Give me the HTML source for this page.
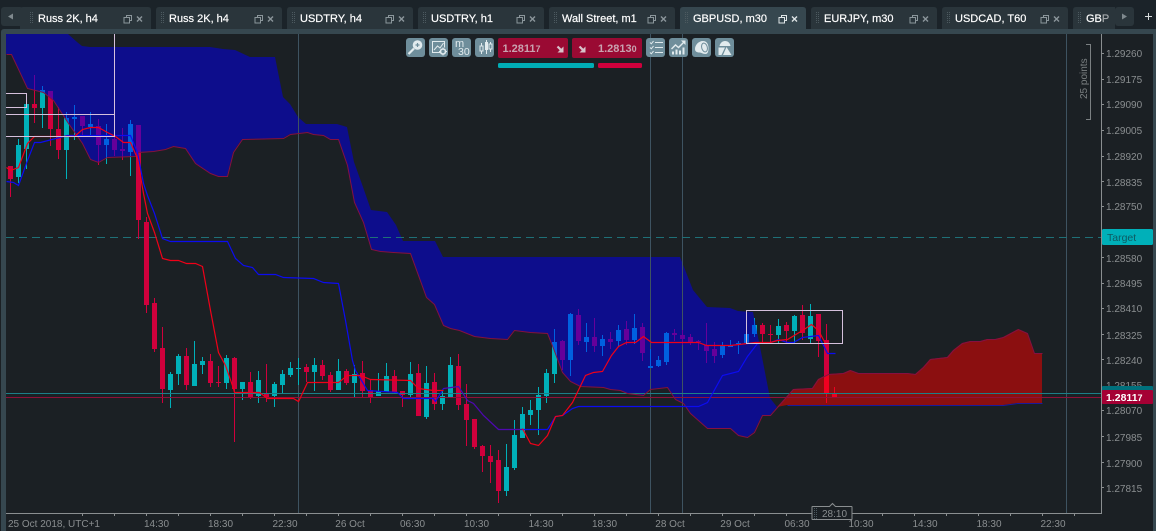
<!DOCTYPE html>
<html><head><meta charset="utf-8"><style>
html,body{margin:0;padding:0;background:#1b2024;width:1156px;height:531px;overflow:hidden}
svg{display:block}
text{font-family:"Liberation Sans",Arial,sans-serif}
.tab{font-size:11px;fill:#fff;stroke:#fff;stroke-width:.2px}
.y{font-size:10px;fill:#8a8e90}
.x{font-size:10px;fill:#8a8e90;text-anchor:middle}
</style></head><body>
<svg width="1156" height="531" viewBox="0 0 1156 531" xmlns="http://www.w3.org/2000/svg">
<defs>
<clipPath id="cc"><rect x="6" y="34" width="1095" height="479"/></clipPath>
<clipPath id="blue"><polygon points="6,34 68,34 77,42 82,46 90,47 210,47 223,49 235,50 250,57 275,57 283,97 290,104 298,117 306,124 337,124 347,127 354,162 363,187 371,210 387,212 396,225 403,241 435,241 443,257 680,257 693,290 707,307 730,308 738,311 753,312 762,357 770,398 777,407 770,415 762,415 754,432 747,437 738,435 730,428 707,428 690,413 683,403 675,399 667,387 650,389 643,395 627,393 620,390 610,389 603,387 580,386 570,381 562,372 553,348 547,333 530,332 514,330 507,339 490,338 474,336 459,330 450,328 443,325 434,304 426,297 410,253 393,252 380,251 371,249 363,222 354,202 347,165 338,139 330,139 323,135 313,134 307,132 290,134 283,138 242,139 233,152 227,176 218,176 210,173 195,163 185,148 173,146 165,149 153,151 138,152 135,156 107,157 98,162 90,159 82,143 68,123 53,100 43,92 27,88 11,54 6,54"/></clipPath>
<clipPath id="redc"><polygon points="777,407 793,389 812,388 818,379 828,374 843,373 850,370 858,373 907,373 915,374 923,367 930,359 947,357 953,350 962,343 970,341 980,341 987,339 995,339 1003,337 1018,329 1027,333 1034,353 1042,353 1042,403 1017,403 1003,405 787,405"/></clipPath>
<path id="t" d="M16 145h5v32h-5zM18 139h1v44h-1zM24 104h5v45h-5zM26 104h1v65h-1zM40 90h5v18h-5zM42 86h1v42h-1zM64 118h5v32h-5zM66 112h1v67h-1zM72 117h5v2h-5zM74 105h1v35h-1zM88 124h5v3h-5zM90 112h1v23h-1zM104 139h5v6h-5zM106 124h1v40h-1zM128 124h5v28h-5zM130 120h1v56h-1zM168 374h5v16h-5zM170 372h1v36h-1zM176 356h5v18h-5zM178 354h1v31h-1zM192 364h5v22h-5zM194 341h1v45h-1zM200 361h5v4h-5zM202 357h1v17h-1zM224 358h5v25h-5zM226 355h1v34h-1zM240 382h5v7h-5zM242 382h1v18h-1zM256 380h5v16h-5zM258 371h1v32h-1zM272 384h5v12h-5zM274 382h1v25h-1zM280 374h5v11h-5zM282 370h1v23h-1zM288 368h5v7h-5zM290 362h1v15h-1zM296 368h5v1h-5zM298 358h1v27h-1zM312 365h5v7h-5zM314 358h1v33h-1zM336 371h5v19h-5zM338 359h1v31h-1zM352 374h5v9h-5zM354 365h1v33h-1zM376 391h5v5h-5zM378 373h1v23h-1zM384 376h5v16h-5zM386 363h1v29h-1zM408 374h5v21h-5zM410 362h1v35h-1zM424 383h5v34h-5zM426 366h1v53h-1zM440 396h5v8h-5zM442 390h1v20h-1zM448 365h5v32h-5zM450 357h1v40h-1zM504 467h5v24h-5zM506 444h1v52h-1zM512 435h5v33h-5zM514 420h1v50h-1zM520 414h5v24h-5zM522 407h1v31h-1zM528 410h5v5h-5zM530 400h1v25h-1zM536 395h5v15h-5zM538 387h1v48h-1zM544 373h5v23h-5zM546 369h1v34h-1zM552 342h5v32h-5zM554 329h1v54h-1zM568 314h5v46h-5zM570 313h1v63h-1zM584 337h5v5h-5zM586 323h1v29h-1zM600 339h5v7h-5zM602 335h1v21h-1zM616 330h5v11h-5zM618 325h1v22h-1zM632 328h5v12h-5zM634 314h1v30h-1zM648 366h5v2h-5zM650 349h1v19h-1zM656 360h5v6h-5zM658 356h1v11h-1zM664 333h5v29h-5zM666 332h1v33h-1zM720 345h5v10h-5zM722 342h1v16h-1zM728 345h5v2h-5zM730 340h1v7h-1zM736 343h5v1h-5zM738 341h1v13h-1zM744 334h5v9h-5zM752 325h5v9h-5zM754 318h1v19h-1zM776 326h5v9h-5zM778 319h1v24h-1zM792 316h5v15h-5zM794 315h1v29h-1zM808 316h5v23h-5zM810 304h1v39h-1z"/>
<path id="r" d="M8 166h5v13h-5zM10 166h1v31h-1zM32 104h5v4h-5zM34 75h1v48h-1zM48 91h5v38h-5zM50 91h1v55h-1zM56 129h5v21h-5zM58 107h1v52h-1zM80 116h5v10h-5zM82 116h1v19h-1zM96 126h5v19h-5zM98 119h1v46h-1zM112 139h5v11h-5zM114 135h1v21h-1zM120 149h5v2h-5zM122 128h1v32h-1zM136 125h5v95h-5zM138 125h1v114h-1zM144 222h5v83h-5zM146 217h1v96h-1zM152 303h5v46h-5zM154 298h1v54h-1zM160 348h5v41h-5zM162 327h1v76h-1zM184 356h5v29h-5zM186 348h1v42h-1zM208 361h5v22h-5zM210 354h1v33h-1zM216 382h5v1h-5zM218 366h1v21h-1zM232 358h5v31h-5zM234 357h1v85h-1zM248 382h5v15h-5zM250 372h1v27h-1zM264 394h5v4h-5zM266 364h1v38h-1zM304 367h5v5h-5zM306 364h1v18h-1zM320 365h5v11h-5zM322 360h1v20h-1zM328 375h5v15h-5zM330 372h1v20h-1zM344 371h5v12h-5zM346 369h1v16h-1zM360 373h5v18h-5zM362 361h1v36h-1zM368 390h5v7h-5zM370 380h1v23h-1zM392 376h5v16h-5zM394 370h1v24h-1zM400 391h5v4h-5zM402 391h1v16h-1zM416 373h5v43h-5zM418 364h1v52h-1zM432 382h5v22h-5zM434 373h1v37h-1zM456 366h5v39h-5zM458 354h1v56h-1zM464 404h5v16h-5zM466 384h1v62h-1zM472 419h5v28h-5zM474 419h1v30h-1zM480 446h5v10h-5zM482 445h1v27h-1zM488 456h5v6h-5zM490 445h1v38h-1zM496 460h5v31h-5zM498 450h1v53h-1zM560 341h5v19h-5zM562 340h1v30h-1zM576 315h5v26h-5zM578 309h1v36h-1zM592 337h5v9h-5zM594 318h1v34h-1zM608 339h5v3h-5zM610 332h1v17h-1zM624 329h5v11h-5zM626 321h1v24h-1zM640 327h5v26h-5zM642 323h1v38h-1zM672 333h5v2h-5zM674 329h1v12h-1zM680 335h5v4h-5zM682 330h1v15h-1zM688 337h5v6h-5zM690 334h1v11h-1zM696 341h5v1h-5zM698 340h1v10h-1zM704 345h5v6h-5zM706 323h1v40h-1zM712 349h5v7h-5zM714 342h1v21h-1zM760 325h5v9h-5zM762 323h1v19h-1zM768 334h5v1h-5zM770 325h1v18h-1zM784 325h5v6h-5zM786 322h1v22h-1zM800 315h5v18h-5zM802 305h1v35h-1zM816 314h5v27h-5zM818 314h1v43h-1zM824 340h5v54h-5zM826 324h1v79h-1zM832 394h5v3h-5zM834 387h1v10h-1z"/>
<g id="ti"><path d="M3.500 2.500V.5h5v5H6.500M1 2.500h5.500v5.500H1z" fill="none" stroke="#8b969b" stroke-width="1"/><path d="M14 1.500l5 5M19 1.500l-5 5" stroke="#8b969b" stroke-width="1.400"/></g>
<g id="ta"><path d="M3.500 2.500V.5h5v5H6.500M1 2.500h5.500v5.500H1z" fill="none" stroke="#dfe5e7" stroke-width="1"/><path d="M14 1.500l5 5M19 1.500l-5 5" stroke="#dfe5e7" stroke-width="1.400"/></g>
<g id="gr" fill="#4d5a60"><rect x="0" y="0" width="1" height="1"/><rect x="2" y="0" width="1" height="1"/><rect x="0" y="2" width="1" height="1"/><rect x="2" y="2" width="1" height="1"/><rect x="0" y="4" width="1" height="1"/><rect x="2" y="4" width="1" height="1"/><rect x="0" y="6" width="1" height="1"/><rect x="2" y="6" width="1" height="1"/><rect x="0" y="8" width="1" height="1"/><rect x="2" y="8" width="1" height="1"/><rect x="0" y="10" width="1" height="1"/><rect x="2" y="10" width="1" height="1"/></g>
</defs>

<!-- strip -->
<rect width="1156" height="29" fill="#1b2329"/>
<rect x="1" y="7" width="22" height="19" rx="3" fill="#2a353b"/>
<path d="M8 16.500l5-3v6z" fill="#7f898e"/>
<rect x="1115" y="7" width="19" height="19" rx="3" fill="#2a353b"/>
<path d="M1122 13.500v6l5-3z" fill="#7f898e"/>
<path d="M1145 16.500h7M1148.500 13v7" stroke="#d8dcdd" stroke-width="1"/>

<path d="M20 29V10q0-3 3-3h125q3 0 3 3v19z" fill="#2a353b"/><use href="#gr" x="30" y="12"/><text class="tab" x="38" y="22">Russ 2K, h4</text><use href="#ti" x="123" y="15"/>
<path d="M156 29V10q0-3 3-3h120q3 0 3 3v19z" fill="#2a353b"/><use href="#gr" x="161" y="12"/><text class="tab" x="169" y="22">Russ 2K, h4</text><use href="#ti" x="254" y="15"/>
<path d="M287 29V10q0-3 3-3h120q3 0 3 3v19z" fill="#2a353b"/><use href="#gr" x="292" y="12"/><text class="tab" x="300" y="22">USDTRY, h4</text><use href="#ti" x="385" y="15"/>
<path d="M418 29V10q0-3 3-3h120q3 0 3 3v19z" fill="#2a353b"/><use href="#gr" x="423" y="12"/><text class="tab" x="431" y="22">USDTRY, h1</text><use href="#ti" x="516" y="15"/>
<path d="M549 29V10q0-3 3-3h120q3 0 3 3v19z" fill="#2a353b"/><use href="#gr" x="554" y="12"/><text class="tab" x="562" y="22">Wall Street, m1</text><use href="#ti" x="647" y="15"/>
<path d="M680 29V10q0-3 3-3h120q3 0 3 3v19z" fill="#36474f"/><use href="#gr" x="685" y="12"/><text class="tab" x="693" y="22">GBPUSD, m30</text><use href="#ta" x="778" y="15"/>
<path d="M811 29V10q0-3 3-3h120q3 0 3 3v19z" fill="#2a353b"/><use href="#gr" x="816" y="12"/><text class="tab" x="824" y="22">EURJPY, m30</text><use href="#ti" x="909" y="15"/>
<path d="M942 29V10q0-3 3-3h120q3 0 3 3v19z" fill="#2a353b"/><use href="#gr" x="947" y="12"/><text class="tab" x="955" y="22">USDCAD, T60</text><use href="#ti" x="1040" y="15"/>
<path d="M1073 29V10q0-3 3-3h39v22z" fill="#2a353b"/><use href="#gr" x="1078" y="12"/><text class="tab" x="1086" y="22">GB<tspan fill-opacity=".55" stroke-opacity=".4">P</tspan></text>

<!-- frame -->
<path d="M1 531V32q0-3 3-3H1156V531z" fill="#36474f"/>
<rect x="6" y="34" width="1147" height="497" fill="#1b2024"/>

<g clip-path="url(#cc)">
<polygon points="6,34 68,34 77,42 82,46 90,47 210,47 223,49 235,50 250,57 275,57 283,97 290,104 298,117 306,124 337,124 347,127 354,162 363,187 371,210 387,212 396,225 403,241 435,241 443,257 680,257 693,290 707,307 730,308 738,311 753,312 762,357 770,398 777,407 770,415 762,415 754,432 747,437 738,435 730,428 707,428 690,413 683,403 675,399 667,387 650,389 643,395 627,393 620,390 610,389 603,387 580,386 570,381 562,372 553,348 547,333 530,332 514,330 507,339 490,338 474,336 459,330 450,328 443,325 434,304 426,297 410,253 393,252 380,251 371,249 363,222 354,202 347,165 338,139 330,139 323,135 313,134 307,132 290,134 283,138 242,139 233,152 227,176 218,176 210,173 195,163 185,148 173,146 165,149 153,151 138,152 135,156 107,157 98,162 90,159 82,143 68,123 53,100 43,92 27,88 11,54 6,54" fill="#0d0d8c"/>
<polygon points="777,407 793,389 812,388 818,379 828,374 843,373 850,370 858,373 907,373 915,374 923,367 930,359 947,357 953,350 962,343 970,341 980,341 987,339 995,339 1003,337 1018,329 1027,333 1034,353 1042,353 1042,403 1017,403 1003,405 787,405" fill="#8b0f10"/>

<path d="M298.500 34V513M650.500 34V513M682.500 34V513M1066.500 34V513" stroke="#3e5361" stroke-width="1" fill="none"/>
<path d="M6 237.500H1101" stroke="#1f7077" stroke-width="1" stroke-dasharray="8 5" fill="none"/>

<g shape-rendering="crispEdges">
<use href="#t" fill="#00b0b9"/>
<use href="#r" fill="#d0003c"/>
<g clip-path="url(#blue)"><use href="#t" fill="#0060e0"/><use href="#r" fill="#66009a"/></g>
<g clip-path="url(#redc)"><use href="#r" fill="#f00020"/></g>
</g>

<path d="M6 393.500H1101" stroke="#1c7f88" stroke-width="1" fill="none"/>
<path d="M6 397.500H1101" stroke="#8f1039" stroke-width="1" fill="none"/>

<g transform="translate(.5 .5)">
<polyline points="6,54 11,54 27,88 43,92 53,100 68,123 82,143 90,159 98,162 107,157 135,156 138,152 153,151 165,149 173,146 185,148 195,163 210,173 218,176 227,176 233,152 242,139 283,138 290,134 307,132 313,134 323,135 330,139 338,139 347,165 354,202 363,222 371,249 380,251 393,252 410,253 426,297 434,304 443,325 450,328 459,330 474,336 490,338 507,339 514,330 530,332 547,333 553,348 562,372 570,381 580,386 603,387 610,389 620,390 627,393 643,395 650,389 667,387 675,399 683,403 690,413 707,428 730,428 738,435 747,437 754,432 762,415 770,415 777,407 793,389 812,388 818,379 828,374 843,373 850,370 858,373 907,373 915,374 923,367 930,359 947,357 953,350 962,343 970,341 980,341 987,339 995,339 1003,337 1018,329 1027,333 1034,353 1042,353" fill="none" stroke="#851041" stroke-width="1"/>
<polyline points="787,405 1003,405 1017,403 1042,403" fill="none" stroke="#1a1a9c" stroke-width="1"/>
<polyline points="6,181 13,182 18,185 27,160 34,142 40,142 67,135 130,135 137,152 143,183 147,195 154,213 162,238 170,241 227,241 235,258 243,265 252,267 258,274 275,274 283,277 313,278 323,282 338,283 345,320 352,360 355,370 367,390 397,392 403,398 433,398 435,401 443,388 458,386 467,400 473,403 483,415 498,429 547,429 555,416 562,415 572,408 578,406 698,406 707,402 722,375 738,371 747,356 757,343 770,342 778,339 787,342 793,342 802,337 818,335 827,353 835,353" fill="none" stroke="#0c0cf0" stroke-width="1.200"/>
<polyline points="6,167 10,170 18,167 27,143 34,136 74,136 82,129 90,127 98,127 107,132 115,136 123,142 130,142 137,158 143,193 147,213 154,232 162,258 170,260 178,260 186,263 195,263 202,266 210,310 218,352 225,365 233,388 234,392 259,392 267,398 293,398 298,401 300,397 307,382 338,382 347,375 360,375 370,379 410,380 418,388 433,390 443,390" fill="none" stroke="#f00018" stroke-width="1.200"/>
<polyline points="443,388 458,386 467,400 473,403 483,415 498,429 522,429" fill="none" stroke="#f00018" stroke-width="1.200" opacity=".3"/>
<polyline points="522,428 530,443 538,445 547,435 555,416 562,415 572,402 585,375 593,372 602,371 611,355 618,346 626,342 635,342 643,336 651,342 698,342 706,345 730,345 747,343 755,342 770,342 777,340 787,339 802,330 811,324 818,330 825,343" fill="none" stroke="#f00018" stroke-width="1.200"/>
</g>

<path d="M6 93.500H26.500V107.500H6M6 114.500H114.500M114.500 34V136.500H6" fill="none" stroke="#d5c0dc" stroke-width="1"/>
<rect x="746.500" y="310.500" width="96" height="33" fill="none" stroke="#d5c0dc" stroke-width="1"/>
</g>

<!-- axes -->
<path d="M1101.500 34V513.500H6" fill="none" stroke="#8a8e90" stroke-width="1"/>
<path d="M82.500 513V516M114.500 513V516M146.500 513V516M178.500 513V516M210.500 513V516M242.500 513V516M274.500 513V516M306.500 513V516M338.500 513V516M370.500 513V516M402.500 513V516M434.500 513V516M466.500 513V516M498.500 513V516M530.500 513V516M562.500 513V516M594.500 513V516M626.500 513V516M658.500 513V516M690.500 513V516M722.500 513V516M754.500 513V516M786.500 513V516M818.500 513V516M850.500 513V516M882.500 513V516M914.500 513V516M946.500 513V516M978.500 513V516M1010.500 513V516M1042.500 513V516M1074.500 513V516" stroke="#8a8e90" stroke-width="1"/>
<path d="M1102 53.500h2M1102 79.500h2M1102 104.500h2M1102 130.500h2M1102 156.500h2M1102 181.500h2M1102 206.500h2M1102 257.500h2M1102 283.500h2M1102 308.500h2M1102 334.500h2M1102 359.500h2M1102 410.500h2M1102 436.500h2M1102 462.500h2M1102 487.500h2" stroke="#8a8e90" stroke-width="1"/>

<text class="y" x="1106" y="57">1.29260</text>
<text class="y" x="1106" y="83">1.29175</text>
<text class="y" x="1106" y="108">1.29090</text>
<text class="y" x="1106" y="134">1.29005</text>
<text class="y" x="1106" y="160">1.28920</text>
<text class="y" x="1106" y="186">1.28835</text>
<text class="y" x="1106" y="210">1.28750</text>
<text class="y" x="1106" y="262">1.28580</text>
<text class="y" x="1106" y="287">1.28495</text>
<text class="y" x="1106" y="312">1.28410</text>
<text class="y" x="1106" y="339">1.28325</text>
<text class="y" x="1106" y="364">1.28240</text>
<text class="y" x="1106" y="389">1.28155</text>
<text class="y" x="1106" y="414">1.28070</text>
<text class="y" x="1106" y="441">1.27985</text>
<text class="y" x="1106" y="467">1.27900</text>
<text class="y" x="1106" y="492">1.27815</text>

<rect x="1102" y="229" width="51" height="16" rx="1.500" fill="#00b0b9"/>
<text x="1107" y="241" font-size="10.500" fill="#0e5a62">Target</text>
<rect x="1102" y="386" width="51" height="10" rx="1" fill="#00707c"/>
<rect x="1102" y="390" width="51" height="14" rx="1" fill="#a50034"/>
<text x="1106" y="401" font-size="10.500" font-weight="bold" fill="#fff">1.2811<tspan font-size="9">7</tspan></text>

<path d="M1086 44.500h4.500v75h-4.500" fill="none" stroke="#7b8082" stroke-width="1"/>
<text transform="translate(1087 99) rotate(-90)" font-size="10" fill="#7b8082">25 points</text>

<text x="8" y="527" class="x" style="text-anchor:start">25 Oct 2018, UTC+1</text>
<text x="156.500" y="527" class="x">14:30</text>
<text x="220.500" y="527" class="x">18:30</text>
<text x="285" y="527" class="x">22:30</text>
<text x="350" y="527" class="x">26 Oct</text>
<text x="412.500" y="527" class="x">06:30</text>
<text x="476.500" y="527" class="x">10:30</text>
<text x="541" y="527" class="x">14:30</text>
<text x="604.500" y="527" class="x">18:30</text>
<text x="670" y="527" class="x">28 Oct</text>
<text x="735" y="527" class="x">29 Oct</text>
<text x="797" y="527" class="x">06:30</text>
<text x="861" y="527" class="x">10:30</text>
<text x="925" y="527" class="x">14:30</text>
<text x="989" y="527" class="x">18:30</text>
<text x="1053" y="527" class="x">22:30</text>

<!-- timer -->
<path d="M812.500 506.500h17l3-3 3 3h16q.5 0 .5 .5v12q0 .5-.5 .5h-39q-.5 0-.5-.5v-12q0-.5 .5-.5z" fill="#1b2024" stroke="#8a8e90" stroke-width="1"/>
<use href="#gr" x="814" y="508"/>
<text x="822" y="517" font-size="10" fill="#8a8e90">28:10</text>

<!-- toolbar buttons -->
<g fill="#6f8e9b">
<rect x="406" y="38" width="19" height="19" rx="3"/>
<rect x="429" y="38" width="19" height="19" rx="3"/>
<rect x="452" y="38" width="19" height="19" rx="3"/>
<rect x="475" y="38" width="19" height="19" rx="3"/>
<rect x="646" y="38" width="19" height="19" rx="3"/>
<rect x="669" y="38" width="19" height="19" rx="3"/>
<rect x="692" y="38" width="19" height="19" rx="3"/>
<rect x="715" y="38" width="19" height="19" rx="3"/>
</g>
<!-- magnifier -->
<circle cx="417.500" cy="45" r="4.800" fill="#e2ebee"/>
<path d="M415.500 45h4M417.500 43v4" stroke="#6f8e9b" stroke-width="1.200"/>
<path d="M414 48.500l-5.500 5.500" stroke="#e2ebee" stroke-width="2.200"/>
<!-- chart gear -->
<path d="M444.500 47.500V41.500H432.500V52.500H440" fill="none" stroke="#e2ebee" stroke-width="1"/>
<path d="M434 50l3.500-4 2.500 2 3.500-5" fill="none" stroke="#e2ebee" stroke-width="1"/>
<circle cx="443" cy="51.500" r="2.500" fill="none" stroke="#e2ebee" stroke-width="1.600"/>
<path d="M443 47.500v1M443 54.500v1M439 51.500h1M446 51.500h1" stroke="#e2ebee" stroke-width="1"/>
<!-- m30 -->
<text x="455" y="47" font-size="11" fill="#e2ebee">m</text>
<text x="458" y="55" font-size="10.500" fill="#e2ebee">30</text>
<!-- candles: three separated bodies with wicks -->
<path d="M481.500 43v11M486.500 40v14M490.500 42v10" stroke="#e2ebee" stroke-width="1" fill="none"/>
<rect x="480" y="46" width="3" height="5" fill="#6f8e9b" stroke="#e2ebee" stroke-width="1"/>
<rect x="485" y="42" width="3" height="8" fill="#e2ebee"/>
<rect x="489" y="44" width="3" height="5" fill="#6f8e9b" stroke="#e2ebee" stroke-width="1"/>
<!-- checklist -->
<path d="M650 42.500l1.300 1.300 2.200-2.700M650 47.500l1.300 1.300 2.200-2.700M650 52.500l1.300 1.300 2.200-2.700" fill="none" stroke="#e2ebee" stroke-width="1"/>
<path d="M655 42.500h8M655 47.500h8M655 52.500h8" stroke="#e2ebee" stroke-width="1"/>
<!-- chart up -->
<path d="M672 54.500h2v-3h-2zM675.500 54.500h2v-5h-2zM679 54.500h2v-4h-2zM682.500 54.500h2v-7h-2z" fill="#e2ebee"/>
<path d="M671.500 49l4-4 3 2.500 5-5" fill="none" stroke="#e2ebee" stroke-width="1.400"/>
<path d="M681 40.500h4.500v4.500z" fill="#e2ebee"/>
<!-- blob -->
<path d="M695 49c0-4 3.500-8 8-8 3.500 0 5.500 3 5.500 7 0 4-1 6-3 6-3.500 0-3.500-1.500-6-1.500-2 0-4.500-.5-4.500-3.500z" fill="#e2ebee"/>
<ellipse cx="704.500" cy="47.500" rx="2.800" ry="4.500" fill="none" stroke="#6f8e9b" stroke-width="1" transform="rotate(-15 704.500 47.500)"/>
<!-- shapes -->
<path d="M719.500 46c.5-3 3-5 5.500-5 3 0 5 2 5.500 5z" fill="#e2ebee"/>
<path d="M718.500 47.500h6.500l-3.500 7.500h-3z" fill="#e2ebee"/>
<path d="M726.500 47l5 8h-8.500z" fill="#e2ebee"/>

<!-- price boxes -->
<rect x="498" y="38" width="70" height="20" rx="2" fill="#9a0a33"/>
<rect x="572" y="38" width="70" height="20" rx="2" fill="#9a0a33"/>
<text x="502.500" y="52" font-size="11" font-weight="bold" fill="#c9a3b0">1.2811<tspan font-size="9">7</tspan></text>
<text x="598" y="52" font-size="11" font-weight="bold" fill="#c9a3b0">1.2813<tspan font-size="9">0</tspan></text>
<path d="M557.500 46.500l4.500 4.500" stroke="#d8c2ca" stroke-width="2.200" fill="none"/>
<path d="M563.500 46.500v6h-6z" fill="#d8c2ca"/>
<path d="M579.500 46.500l4.500 4.500" stroke="#d8c2ca" stroke-width="2.200" fill="none"/>
<path d="M585.500 46.500v6h-6z" fill="#d8c2ca"/>
<rect x="498" y="63" width="96" height="5" rx="1.500" fill="#00adb5"/>
<rect x="598" y="63" width="44" height="5" rx="1.500" fill="#d0003c"/>
</svg>
</body></html>
